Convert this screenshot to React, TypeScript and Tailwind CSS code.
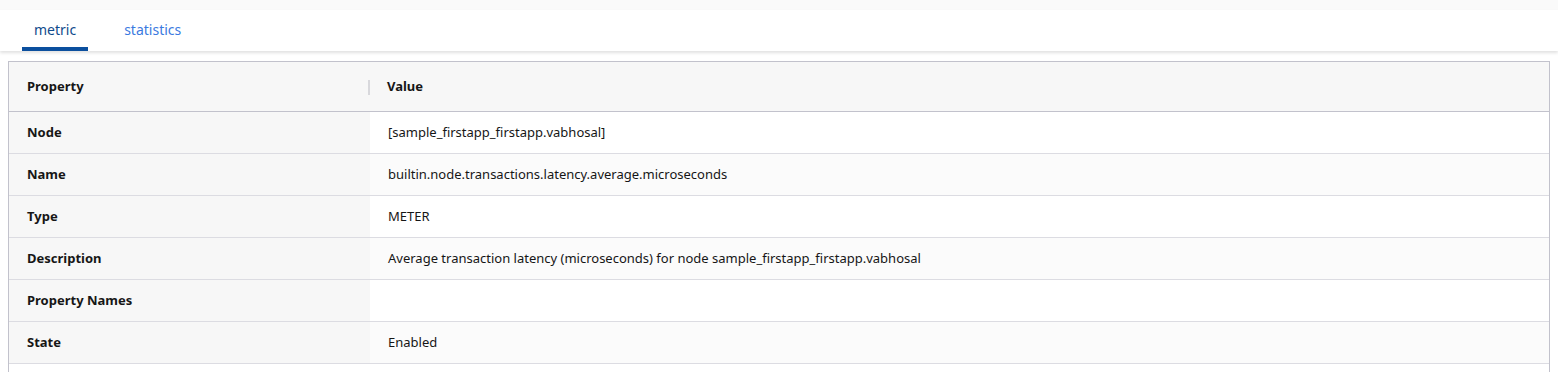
import { useState } from 'react';

const rows = [
  { name: 'Node', value: '[sample_firstapp_firstapp.vabhosal]' },
  { name: 'Name', value: 'builtin.node.transactions.latency.average.microseconds' },
  { name: 'Type', value: 'METER' },
  { name: 'Description', value: 'Average transaction latency (microseconds) for node sample_firstapp_firstapp.vabhosal' },
  { name: 'Property Names', value: '' },
  { name: 'State', value: 'Enabled' },
];

export default function App() {
  const [activeTab, setActiveTab] = useState<'metric' | 'statistics'>('metric');

  return (
    <div className="min-h-[372px] bg-white font-['Noto_Sans',sans-serif] text-[13px] text-[#161616]">
      <div className="h-[10px] bg-[#fafafa]" />

      {/* tabs */}
      <div className="flex h-[41px] items-end gap-[24px] bg-white px-[22px] shadow-[0_2px_3px_rgba(0,0,0,0.12)]">
        {[
          { key: 'metric', label: 'metric' },
          { key: 'statistics', label: 'statistics' },
        ].map((tab) => (
          <button
            key={tab.key}
            onClick={() => setActiveTab(tab.key as any)}
            className={`h-full border-b-[4px] px-[12px] pt-[1px] text-[14px] ${
              activeTab === tab.key
                ? 'border-[#0b4f9e] text-[#0f4a8c]'
                : 'border-transparent text-[#3b7ae0]'
            }`}
          >
            {tab.label}
          </button>
        ))}
      </div>

      {/* property table */}
      <div className="px-[8px] pt-[10px]">
        <div className="border border-b-0 border-[#c2c2cc]">
          <div className="flex h-[50px] items-center border-b border-[#c2c2cc] bg-[#f7f7f7] pt-[1px] font-bold">
            <div className="flex h-full w-[361px] items-center justify-between pl-[18px]">
              <span>Property</span>
              <span className="h-[15px] w-[2px] bg-[#d8d8dc]" />
            </div>
            <div className="pl-[17px]">Value</div>
          </div>
          {rows.map((row, index) => (
            <div key={row.name} className="flex h-[42px] border-b border-[#dcdce2]">
              <div className="flex w-[361px] items-center bg-[#f7f7f7] pl-[18px] pt-[1px] font-bold">{row.name}</div>
              <div className={`flex flex-1 items-center pl-[18px] pt-[1px] ${index % 2 === 1 ? 'bg-[#fbfbfb]' : 'bg-white'}`}>
                {row.value}
              </div>
            </div>
          ))}
          <div className="h-[20px]" />
        </div>
      </div>
    </div>
  );
}
